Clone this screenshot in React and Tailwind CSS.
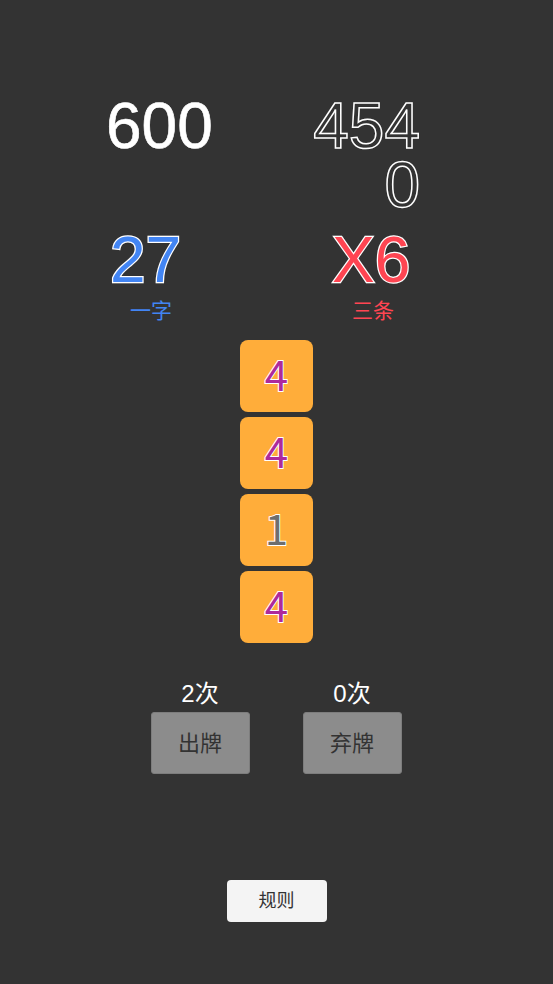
const FONT = "font-['Liberation_Sans','Noto_Sans_CJK_SC',sans-serif]"

const cards = [
  { n: '4', color: 'text-[#ad2a9c]' },
  { n: '4', color: 'text-[#ad2a9c]' },
  { n: '1', color: 'text-[#6e6e6e]' },
  { n: '4', color: 'text-[#ad2a9c]' },
]

const ActionButton = ({ count, label }) => (
  <div className="flex flex-col items-center w-[99px]">
    <p className="text-white text-[24px] leading-[26px]">{count}次</p>
    <button className="mt-[5px] w-[99px] h-[62px] bg-[#8c8c8c] border border-[#7d7d7d] rounded-[3px] text-[#333] text-[22px]">
      {label}
    </button>
  </div>
)

export default function App() {
  return (
    <div className={`min-h-[984px] w-full bg-[#333333] ${FONT} flex flex-col`}>
      {/* scores */}
      <div className="flex pt-[97px]">
        <div className="w-[276px] pl-[106px]">
          <p className="text-white text-[64px] leading-[59px] [-webkit-text-stroke:0.6px_white]">600</p>
        </div>
        <div className="w-[144px] flex justify-end">
          <p className="w-[116px] text-right break-all text-[64px] leading-[59px] text-transparent [-webkit-text-stroke:1.5px_white]">
            4540
          </p>
        </div>
      </div>

      {/* base + multiplier */}
      <div className="flex mt-[16px]">
        <div className="w-[276px] pl-[110px]">
          <p className="text-[#4285f4] text-[64px] leading-[59px] [-webkit-text-stroke:2.5px_white] [paint-order:stroke_fill]">27</p>
          <p className="ml-[20px] mt-[9px] text-[#4285f4] text-[21px] leading-[24px]">一字</p>
        </div>
        <div className="pl-[56px]">
          <p className="text-[#ff4552] text-[64px] leading-[59px] [-webkit-text-stroke:2.5px_white] [paint-order:stroke_fill]">X6</p>
          <p className="ml-[20px] mt-[9px] text-[#ff4552] text-[21px] leading-[24px]">三条</p>
        </div>
      </div>

      {/* hand */}
      <div className="flex flex-col items-center gap-[5px] mt-[17px]">
        {cards.map((c, i) => (
          <div key={i} className="w-[73px] h-[72px] rounded-[8px] bg-[#ffad3a] flex items-center justify-center pb-[7px]">
            <span className={`${c.color} font-['Noto_Sans_CJK_SC',sans-serif] text-[42px] leading-none [-webkit-text-stroke:2px_white] [paint-order:stroke_fill]`}>{c.n}</span>
          </div>
        ))}
      </div>

      {/* actions */}
      <div className="flex justify-center gap-[53px] mt-[38px] pr-[1px]">
        <ActionButton count={2} label="出牌" />
        <ActionButton count={0} label="弃牌" />
      </div>

      <div className="flex justify-center mt-[106px]">
        <button className="w-[100px] h-[42px] bg-[#f4f4f4] rounded-[4px] text-[#333] text-[18px]">规则</button>
      </div>
    </div>
  )
}
